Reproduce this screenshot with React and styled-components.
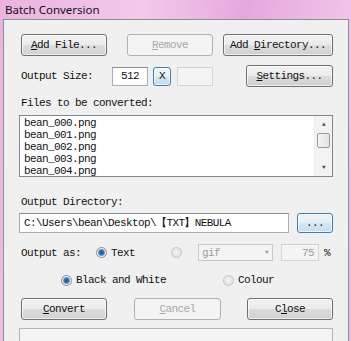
import styled, { createGlobalStyle, css } from "styled-components";

const mono = `"Liberation Mono", "DejaVu Sans Mono", monospace`;

const Global = createGlobalStyle`
  html, body {
    margin: 0;
    padding: 0;
    width: 351px;
    height: 341px;
    overflow: hidden;
  }
  body {
    background: linear-gradient(100deg, #e9b3df 0%, #f3c9ec 35%, #e6a8dc 60%, #f0c2ea 85%, #e9b8e3 100%);
  }
`;

const Frame = styled.div`
  width: 351px;
  height: 341px;
  display: flex;
  flex-direction: column;
  padding: 0 2px 0 3px;
  box-sizing: border-box;
`;

const TitleBar = styled.div`
  height: 22px;
  display: flex;
  align-items: center;
  padding-left: 2px;
  font-family: "Noto Sans", "Open Sans", sans-serif;
  font-size: 11.5px;
  color: #111;
`;

const Client = styled.div`
  flex: 1;
  background: #f0f0f0;
  border: 1px solid #8e8e8e;
  border-bottom: none;
  padding: 14px 15px 0 15px;
  display: flex;
  flex-direction: column;
  font-family: ${mono};
  font-size: 11px;
  letter-spacing: -0.6px;
  color: #111;
`;

const Row = styled.div`
  display: flex;
  align-items: center;
  height: ${(p) => p.$h || 22}px;
  margin-top: ${(p) => p.$mt || 0}px;
  padding-left: ${(p) => p.$pl || 0}px;
`;

const Button = styled.div`
  box-sizing: border-box;
  width: ${(p) => p.$w}px;
  height: ${(p) => p.$h || 22}px;
  margin-left: ${(p) => p.$ml || 0}px;
  border: 1px solid #707070;
  border-radius: 3px;
  display: flex;
  align-items: center;
  justify-content: center;
  white-space: pre;
  color: #111;
  background: linear-gradient(#f2f2f2 0%, #ebebeb 48%, #dddddd 52%, #cfcfcf 100%);
  box-shadow: inset 0 0 0 1px rgba(255, 255, 255, 0.7);
  ${(p) =>
    p.$disabled &&
    css`
      border-color: #adb2b5;
      background: #f4f4f4;
      color: #a8a8a8;
      box-shadow: none;
    `}
  ${(p) =>
    p.$focus &&
    css`
      border-color: #3c7fb1;
      background: linear-gradient(#eef6fb 0%, #e3eff7 48%, #d3e6f3 52%, #c4dcee 100%);
    `}
`;

const U = styled.span`
  text-decoration: underline;
`;

const Label = styled.span`
  white-space: pre;
`;

const TextBox = styled.div`
  box-sizing: border-box;
  width: ${(p) => p.$w}px;
  height: ${(p) => p.$h || 19}px;
  margin-left: ${(p) => p.$ml || 0}px;
  background: ${(p) => (p.$disabled ? "#f4f4f4" : "#fff")};
  border: 1px solid ${(p) => (p.$disabled ? "#d6d6d6" : "#abadb3")};
  border-top-color: ${(p) => (p.$disabled ? "#cfcfcf" : "#8b8d93")};
  display: flex;
  align-items: center;
  justify-content: ${(p) => p.$align || "flex-start"};
  padding: 0 4px;
  color: ${(p) => (p.$disabled ? "#9a9a9a" : "#111")};
  white-space: pre;
`;

const ListBox = styled.div`
  box-sizing: border-box;
  height: 62px;
  margin-top: 6px;
  background: #fff;
  border: 1px solid #828790;
  display: flex;
`;

const Items = styled.div`
  flex: 1;
  padding: 1px 0 0 4px;
  display: flex;
  flex-direction: column;
`;

const Item = styled.div`
  height: 12.3px;
  line-height: 12px;
`;

const ScrollBar = styled.div`
  width: 17px;
  background: #f3f3f3;
  border-left: 1px solid #ececec;
  display: flex;
  flex-direction: column;
  align-items: center;
`;

const Arrow = styled.div`
  height: 17px;
  display: flex;
  align-items: center;
  justify-content: center;
  font-size: 6px;
  color: #444;
`;

const Thumb = styled.div`
  width: 13px;
  height: 15px;
  box-sizing: border-box;
  border: 1px solid #9a9a9a;
  border-radius: 2px;
  background: linear-gradient(90deg, #f4f4f4, #e2e2e2);
`;

const Spacer = styled.div`
  flex: 1;
`;

const Radio = styled.span`
  display: inline-flex;
  align-items: center;
  margin-left: ${(p) => p.$ml || 0}px;
  color: ${(p) => (p.$disabled ? "#a0a0a0" : "#111")};
  white-space: pre;
  &::before {
    content: "";
    box-sizing: border-box;
    width: 11px;
    height: 11px;
    margin-right: 4px;
    border-radius: 50%;
    border: 1px solid ${(p) => (p.$disabled ? "#c4c4c4" : "#8a8a8a")};
    background: ${(p) =>
      p.$checked
        ? "radial-gradient(circle, #1d4f86 0, #3a78b8 2.5px, #9cc5e8 3.5px, #eef4fa 4px)"
        : p.$disabled
        ? "radial-gradient(circle, #f6f6f6 0, #e4e4e4 4px)"
        : "radial-gradient(circle, #fff 0, #e0e0e0 4px)"};
  }
`;

const Combo = styled.div`
  box-sizing: border-box;
  width: 75px;
  height: 17px;
  margin-left: 12px;
  border: 1px solid #c9c9c9;
  background: #f4f4f4;
  color: #9c9c9c;
  display: flex;
  align-items: center;
  padding-left: 3px;
`;

const ComboArrow = styled.span`
  margin-left: auto;
  margin-right: 4px;
  font-size: 6px;
  color: #9a9a9a;
`;

const StatusBox = styled.div`
  margin-top: 8px;
  height: 12px;
  border: 1px solid #b5b5b5;
  border-bottom: none;
  background: #f4f4f4;
`;

const files = ["bean_000.png", "bean_001.png", "bean_002.png", "bean_003.png", "bean_004.png"];

export default function App() {
  return (
    <Frame>
      <Global />
      <TitleBar>Batch Conversion</TitleBar>
      <Client>
        <Row $pl={2}>
          <Button $w={86}>
            <span>
              <U>A</U>dd File...
            </span>
          </Button>
          <Button $w={86} $ml={20} $disabled>
            <span>
              <U>R</U>emove
            </span>
          </Button>
          <Button $w={110} $ml={10}>
            <span>
              Add <U>D</U>irectory...
            </span>
          </Button>
        </Row>
        <Row $mt={9} $pl={2}>
          <Label style={{ width: 91 }}>Output Size:</Label>
          <TextBox $w={36} $align="center">
            512
          </TextBox>
          <Button $w={18} $h={19} $ml={5} $focus>
            X
          </Button>
          <TextBox $w={36} $ml={6} $disabled />
          <Spacer />
          <Button $w={87}>
            <span>
              <U>S</U>ettings...
            </span>
          </Button>
        </Row>
        <Row $h={12} $mt={10} $pl={2}>
          Files to be converted:
        </Row>
        <ListBox>
          <Items>
            {files.map((f) => (
              <Item key={f}>{f}</Item>
            ))}
          </Items>
          <ScrollBar>
            <Arrow>▲</Arrow>
            <Thumb />
            <Spacer />
            <Arrow>▼</Arrow>
          </ScrollBar>
        </ListBox>
        <Row $h={12} $mt={19} $pl={2}>
          Output Directory:
        </Row>
        <Row $h={21} $mt={4}>
          <TextBox $w={270} $h={20}>
            C:\Users\bean\Desktop\【TXT】NEBULA
          </TextBox>
          <Spacer />
          <Button $w={36} $h={20} $focus>
            ...
          </Button>
        </Row>
        <Row $h={17} $mt={11} $pl={2}>
          <Label style={{ width: 75 }}>Output as:</Label>
          <Radio $checked>Text</Radio>
          <Radio $ml={36} $disabled />
          <Combo>
            gif
            <ComboArrow>▼</ComboArrow>
          </Combo>
          <TextBox $w={38} $h={17} $ml={8} $align="flex-end" $disabled>
            75
          </TextBox>
          <Label style={{ marginLeft: 5 }}>%</Label>
        </Row>
        <Row $h={14} $mt={12} $pl={42}>
          <Radio $checked>Black and White</Radio>
          <Radio $ml={57} $disabled>
            <span style={{ color: "#111" }}>Colour</span>
          </Radio>
        </Row>
        <Row $mt={11} $pl={2}>
          <Button $w={86}>
            <span>
              <U>C</U>onvert
            </span>
          </Button>
          <Button $w={87} $ml={27} $disabled>
            <span>
              <U>C</U>ancel
            </span>
          </Button>
          <Button $w={86} $ml={26}>
            <span>
              C<U>l</U>ose
            </span>
          </Button>
        </Row>
        <StatusBox />
      </Client>
    </Frame>
  );
}
